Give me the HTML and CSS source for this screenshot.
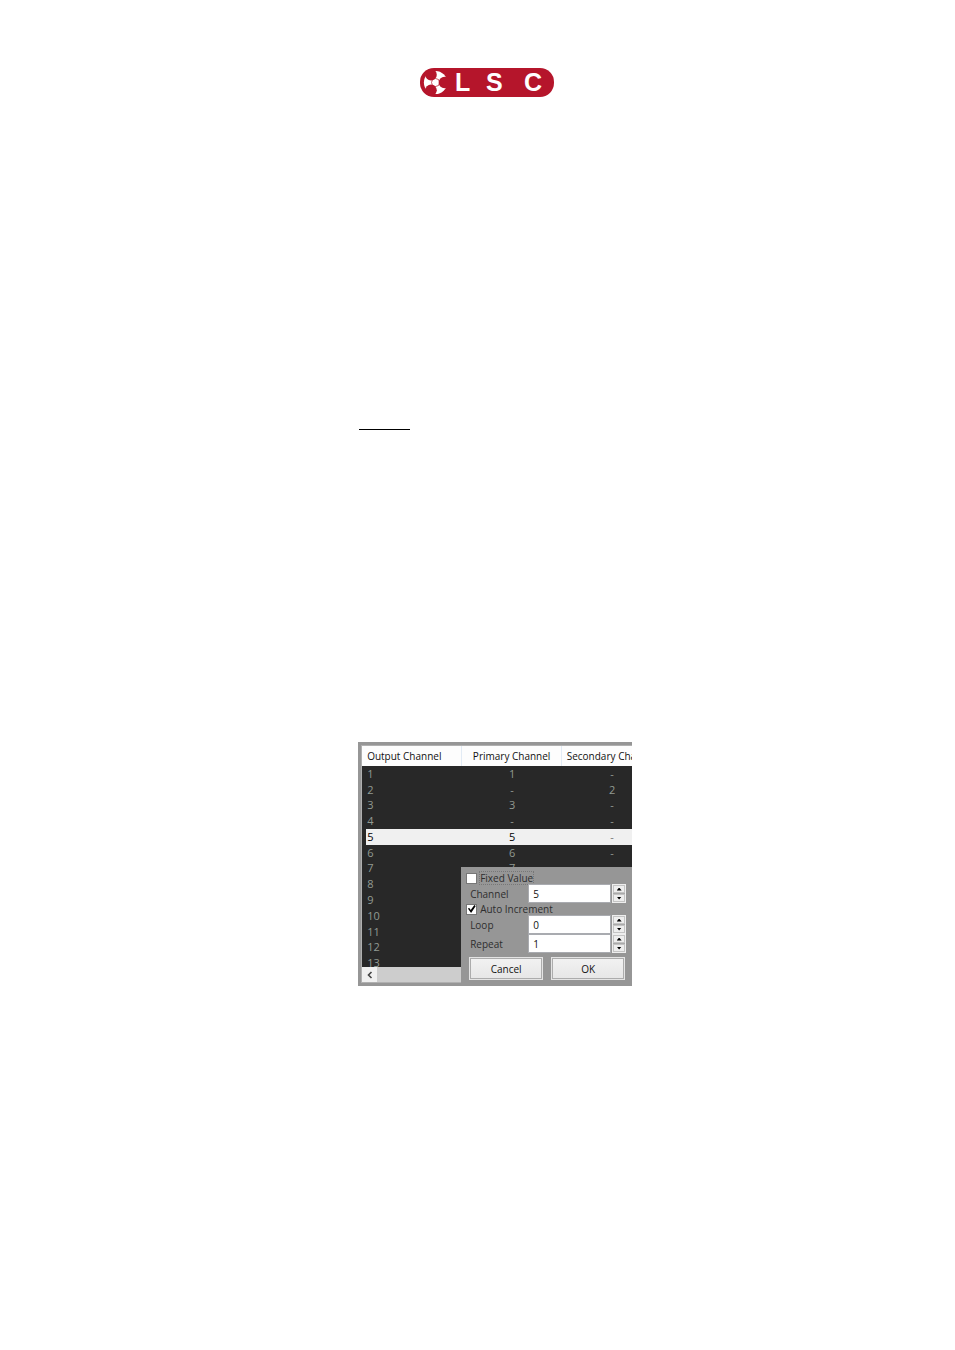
FILE: index.html
```html
<!DOCTYPE html>
<html lang="en">
<head>
<meta charset="UTF-8">
<title>LSC - Output Channel Patch</title>
<link rel="stylesheet" href="styles.css">
</head>
<body>

<header class="page-header">
  <svg class="logo" viewBox="0 0 134 29" role="img" aria-label="LSC">
    <rect width="134" height="29" rx="14" fill="#b5152b"/>
    <circle cx="15.5" cy="14.5" r="11.6" fill="#fff"/>
    <g fill="#b5152b">
      <circle cx="11" cy="6.7" r="5.8"/>
      <circle cx="11" cy="22.3" r="5.8"/>
      <circle cx="24.5" cy="14.5" r="5.8"/>
    </g>
    <circle cx="15.5" cy="14.5" r="4" fill="none" stroke="#b5152b" stroke-width="0.7"/>
    <g class="logo-text">
      <text x="35" y="23">L</text>
      <text x="66" y="23">S</text>
      <text x="104" y="23">C</text>
    </g>
  </svg>
</header>

<main class="content">
  <hr class="rule">

  <div class="window">
    <div class="list">
      <table class="channels">
        <thead>
          <tr><th>Output Channel</th><th>Primary Channel</th><th>Secondary Channel</th></tr>
        </thead>
        <tbody>
          <tr><td>1</td><td>1</td><td>-</td></tr>
          <tr><td>2</td><td>-</td><td>2</td></tr>
          <tr><td>3</td><td>3</td><td>-</td></tr>
          <tr><td>4</td><td>-</td><td>-</td></tr>
          <tr class="selected"><td>5</td><td>5</td><td>-</td></tr>
          <tr><td>6</td><td>6</td><td>-</td></tr>
          <tr><td>7</td><td>7</td><td>-</td></tr>
          <tr><td>8</td><td></td><td></td></tr>
          <tr><td>9</td><td></td><td></td></tr>
          <tr><td>10</td><td></td><td></td></tr>
          <tr><td>11</td><td></td><td></td></tr>
          <tr><td>12</td><td></td><td></td></tr>
          <tr><td>13</td><td></td><td></td></tr>
        </tbody>
      </table>
    </div>
    <div class="scrollbar">
      <button class="scroll-left" aria-label="Scroll left">
        <svg width="6" height="8" viewBox="0 0 6 8"><path d="M4.5 1 L1.5 4 L4.5 7" fill="none" stroke="#444" stroke-width="1.6"/></svg>
      </button>
    </div>

    <!-- Channel dialog, sits over the list -->
    <form class="dialog">
      <label class="check"><input type="checkbox"><span class="focused">Fixed Value</span></label>
      <div class="field">
        <label for="channel">Channel</label>
        <input type="text" id="channel" value="5">
        <div class="spin">
          <button type="button" aria-label="Channel up"><i class="up"></i></button>
          <button type="button" aria-label="Channel down"><i class="down"></i></button>
        </div>
      </div>
      <label class="check"><input type="checkbox" checked><span>Auto Increment</span></label>
      <div class="field">
        <label for="loop">Loop</label>
        <input type="text" id="loop" value="0">
        <div class="spin">
          <button type="button" aria-label="Loop up"><i class="up"></i></button>
          <button type="button" aria-label="Loop down"><i class="down"></i></button>
        </div>
      </div>
      <div class="field">
        <label for="repeat">Repeat</label>
        <input type="text" id="repeat" value="1">
        <div class="spin">
          <button type="button" aria-label="Repeat up"><i class="up"></i></button>
          <button type="button" aria-label="Repeat down"><i class="down"></i></button>
        </div>
      </div>
      <div class="actions">
        <button type="button">Cancel</button>
        <button type="button">OK</button>
      </div>
    </form>
  </div>
</main>

</body>
</html>
```
FILE: styles.css
```css
* {
  box-sizing: border-box;
}
body {
  margin: 0;
  background: #fff;
  font-family: "Open Sans", "Noto Sans", sans-serif;
  font-size: 10px;
  line-height: 12px;
  color: #111;
}
button, input {
  font: inherit;
  color: inherit;
  margin: 0;
  padding: 0;
}
.page-header {
  padding: 68px 0 0 18px;
  text-align: center;
}
.logo {
  display: block;
  width: 134px;
  height: 29px;
  margin: 0 auto;
}
.logo-text {
  fill: #fff;
  font-family: "Liberation Sans", Arial, sans-serif;
  font-size: 25px;
  font-weight: bold;
}
.content {
  padding: 332px 0 0 37.5%;
}
.rule {
  width: 51px;
  height: 1px;
  margin: 0 0 312px 1px;
  border: none;
  background: #000;
}
.window {
  position: relative;
  width: 274px;
  padding: 3px 0 3px 3px;
  background: #969696;
}

/* channel list */
.list {
  height: 222px;
  overflow: hidden;
  border-top: 1px solid #b0b0b0;
  border-left: 1px solid #b0b0b0;
  background: #282828;
}
.channels {
  width: 300px;
  height: 225px;
  table-layout: fixed;
  border-collapse: separate;
  border-spacing: 0;
}
.channels th {
  height: 20px;
  padding: 0;
  background: #fdfdfd;
  border-right: 1px solid #e2ebf5;
  font-weight: normal;
  white-space: nowrap;
}
.channels th:first-child,
.channels td:first-child {
  padding-left: 5px;
  text-align: left;
}
.channels td {
  padding: 0;
  color: #929a92;
  font-size: 11px;
  text-align: center;
}
.channels .selected td {
  background: #f0f0f0;
  color: #000;
}
.channels .selected td:first-child {
  border-left: 4px solid #282828;
  padding-left: 1px;
}
.channels .selected td:last-child {
  color: #777;
}
.scrollbar {
  display: flex;
  height: 16px;
  background: #cdcdcd;
  border-left: 1px solid #b0b0b0;
  border-bottom: 1px solid #b0b0b0;
}
.scroll-left {
  display: flex;
  align-items: center;
  justify-content: center;
  width: 15px;
  border: none;
  background: #f0f0f0;
}

/* dialog */
.dialog {
  position: absolute;
  right: 0;
  bottom: 0;
  width: 171px;
  height: 119px;
  padding: 5px 6px 0 5px;
  background: #969696;
  color: #2e2e2e;
}
.check {
  display: flex;
  align-items: center;
  gap: 3px;
  height: 12px;
}
.check input {
  appearance: none;
  width: 11px;
  height: 11px;
  border: 1px solid #777;
  background: #fff;
}
.check input:checked::before {
  content: "";
  display: block;
  width: 9px;
  height: 9px;
  background: #000;
  clip-path: polygon(8% 45%, 24% 38%, 40% 62%, 80% 6%, 96% 16%, 44% 94%);
}
.focused {
  outline: 1px dotted #777;
}
.field {
  display: grid;
  grid-template-columns: 57px 83px 14px;
  column-gap: 1px;
  align-items: center;
  height: 19px;
  padding-left: 4px;
}
.field input {
  width: 100%;
  height: 19px;
  padding-left: 4px;
  border: 1px solid #a9abb0;
  background: #fff;
  color: #111;
}
.spin {
  display: grid;
  grid-template-rows: 1fr 1fr;
  height: 19px;
  border: 1px solid #eee;
  background: #aaa;
  row-gap: 1px;
}
.spin button {
  display: flex;
  align-items: center;
  justify-content: center;
  border: 1px solid #c4c4c4;
  background: #eee;
}
.spin i {
  width: 5px;
  height: 3px;
  background: #000;
}
.up {
  clip-path: polygon(50% 0, 100% 100%, 0 100%);
}
.down {
  clip-path: polygon(0 0, 100% 0, 50% 100%);
}
.actions {
  display: flex;
  gap: 8px;
  padding: 4px 0 0 3px;
}
.actions button {
  width: 74px;
  height: 23px;
  border: 1px solid #e4e4e4;
  background: linear-gradient(#f2f2f2, #e6e6e6);
  box-shadow: inset 0 0 0 1px #acacac;
  color: #111;
}
```
